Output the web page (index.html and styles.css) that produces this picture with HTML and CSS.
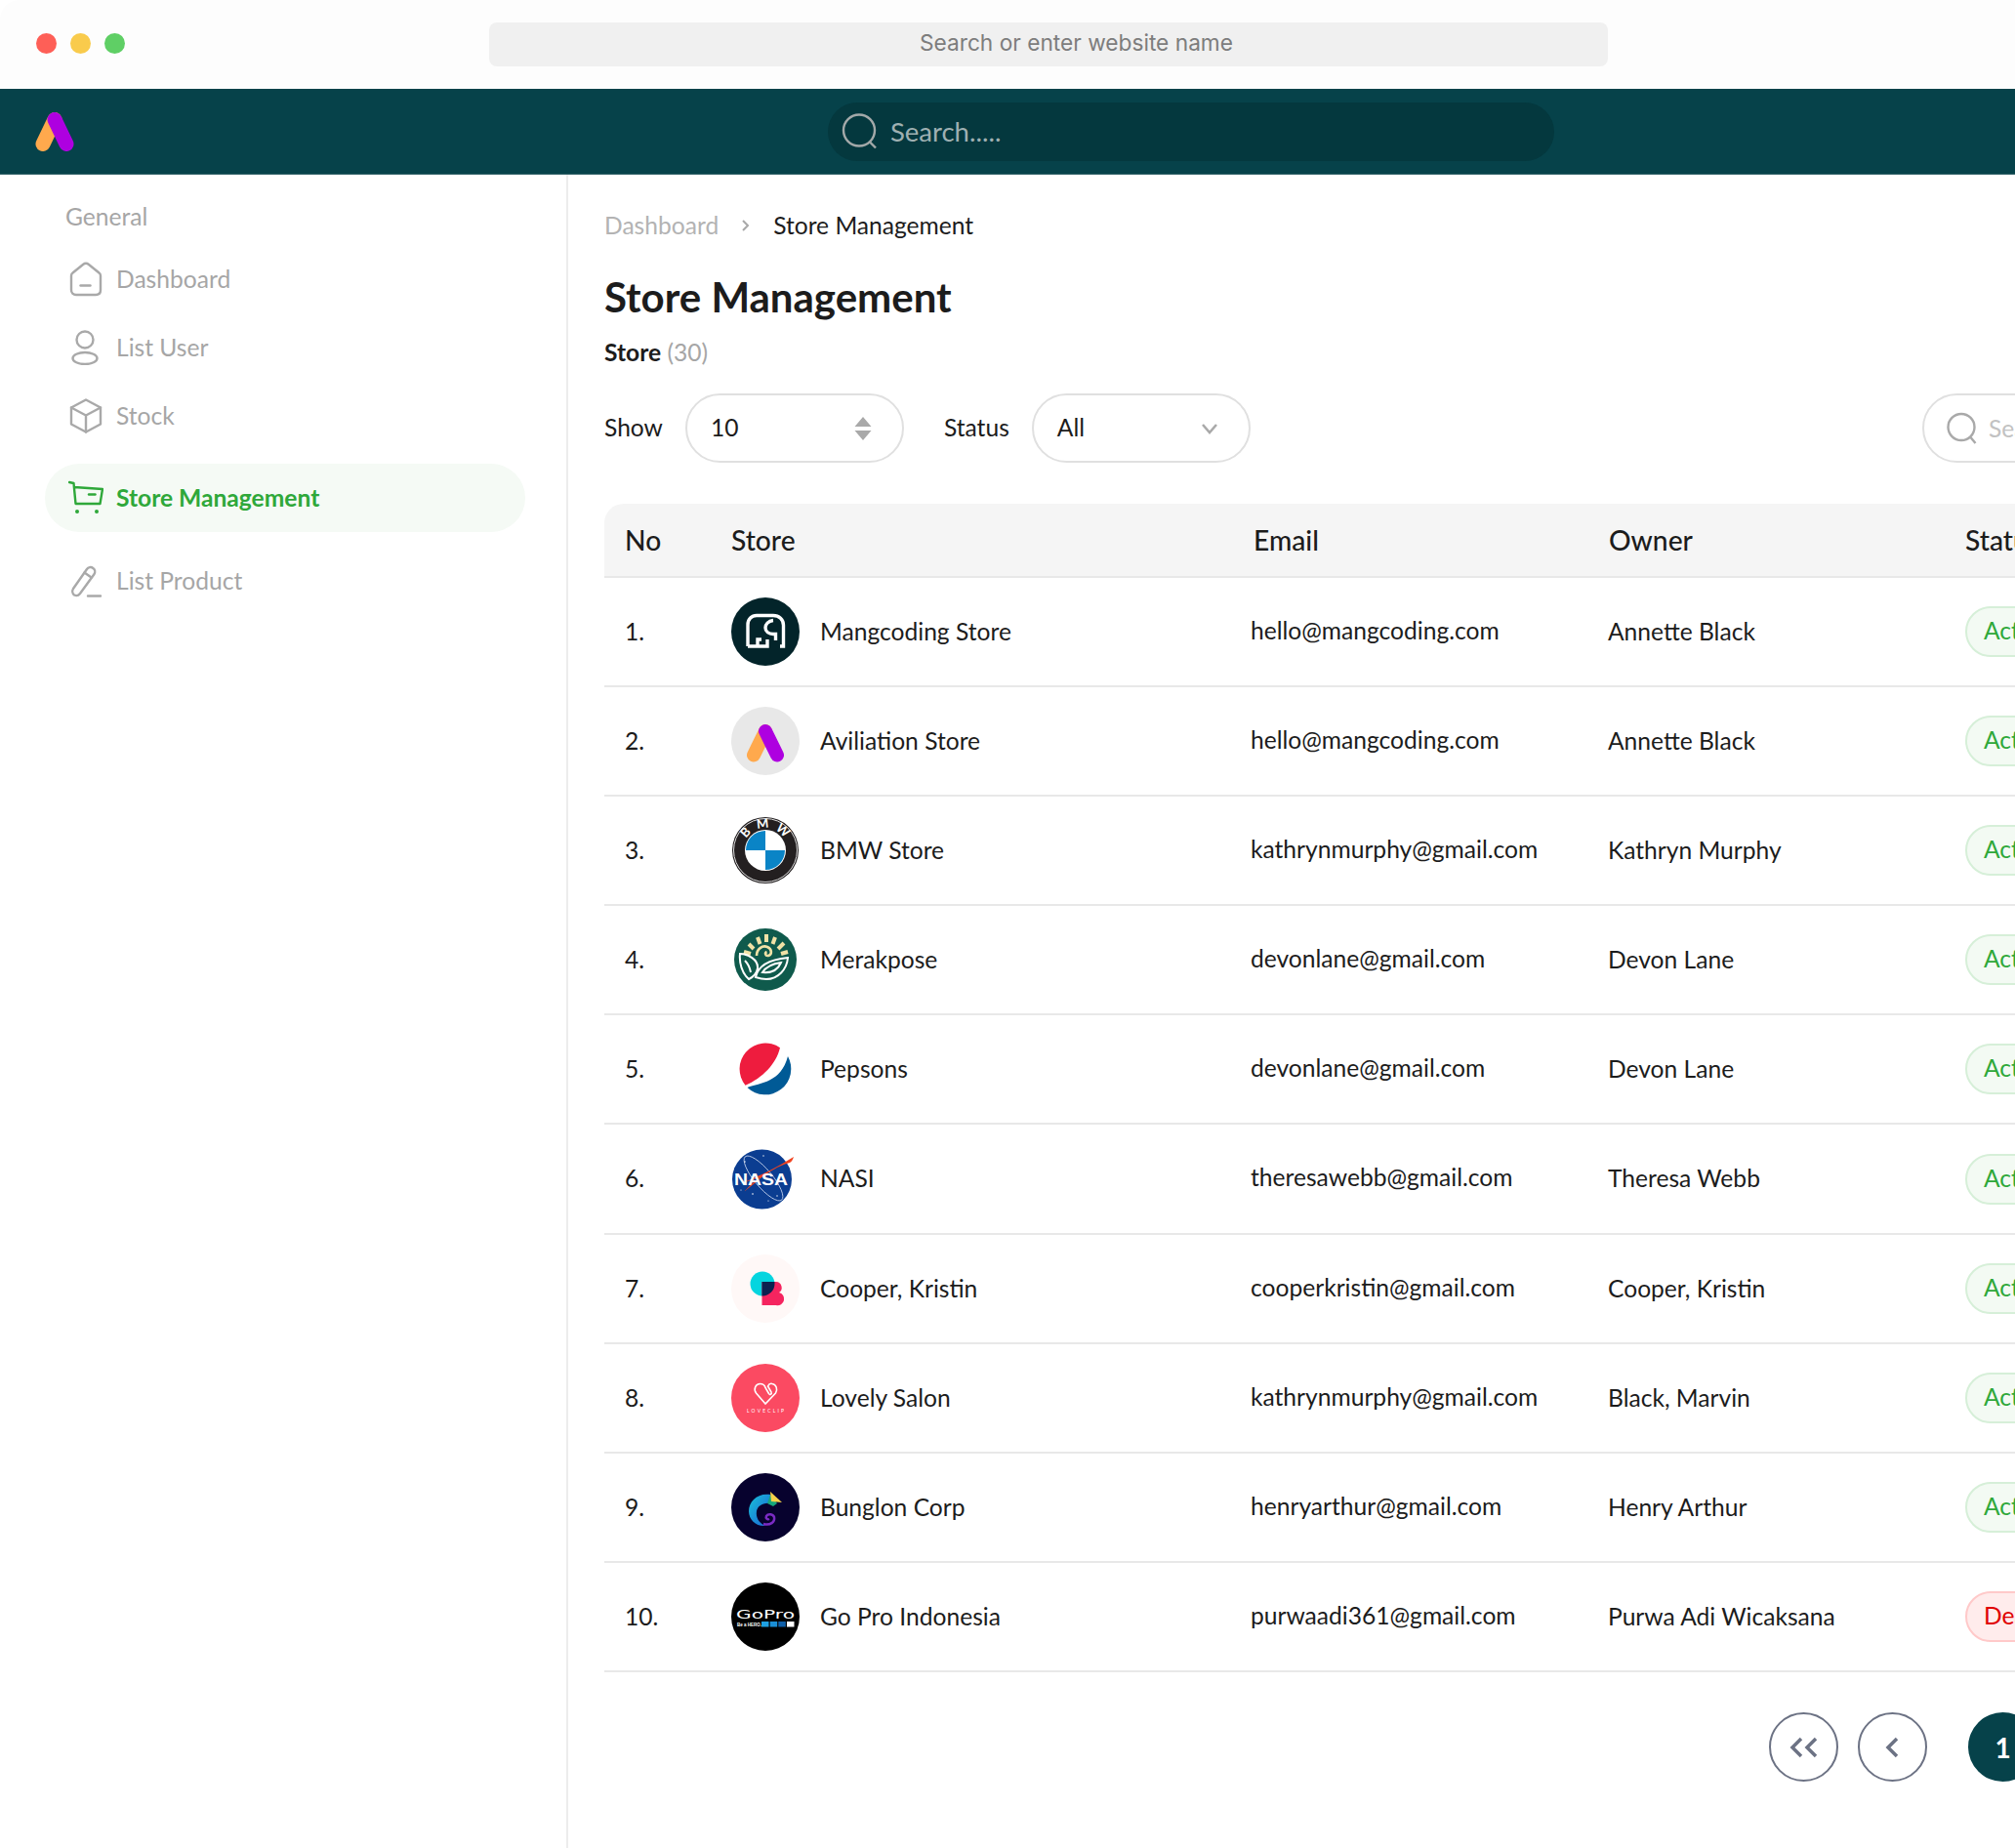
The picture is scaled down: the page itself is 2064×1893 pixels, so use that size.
FILE: index.html
```html
<!DOCTYPE html>
<html lang="en">
<head>
  <meta charset="UTF-8">
  <title>Store Management</title>
  <link rel="stylesheet" href="styles.css">
</head>
<body>

  <div class="window-bar">
    <div class="lights">
      <span class="light red"></span>
      <span class="light yellow"></span>
      <span class="light green"></span>
    </div>
    <div class="address">Search or enter website name</div>
  </div>

  <header class="topnav">
    <div class="brand">
      <svg width="40" height="40" viewBox="0 0 40 40">
        <path d="M8 32.500L20 7.500" stroke="#ffa94d" stroke-width="15" stroke-linecap="round"/>
        <path d="M15 12l7 15 4-8-5-11z" fill="#ff8f1a"/>
        <path d="M20 7.500L32 32.500" stroke="#ae00e0" stroke-width="15" stroke-linecap="round"/>
      </svg>
    </div>
    <div class="top-search">
      <svg width="38" height="38" viewBox="0 0 38 38" fill="none" stroke="#a3a9a9" stroke-width="2.400">
        <circle cx="18" cy="17.500" r="16"/>
        <path d="M29 29.500l6 6"/>
      </svg>
      <span>Search.....</span>
    </div>
  </header>

  <div class="layout">
    <aside class="sidebar">
      <div class="side-title">General</div>
      <ul class="side-menu">
        <li class="side-item">
          <svg class="side-icon" viewBox="0 0 36 36">
            <path d="M3 14.500c0-1.200.5-2.300 1.500-3L15 3c1.800-1.400 4.200-1.400 6 0l10.500 8.500c1 .7 1.500 1.800 1.500 3V29c0 3-2 5-5 5H8c-3 0-5-2-5-5z"/>
            <path d="M12.500 24.500h10"/>
          </svg>
          <span class="side-label">Dashboard</span>
        </li>
        <li class="side-item">
          <svg class="side-icon" viewBox="0 0 36 36">
            <circle cx="17" cy="10" r="8.500"/>
            <ellipse cx="17" cy="29" rx="12.500" ry="6"/>
          </svg>
          <span class="side-label">List User</span>
        </li>
        <li class="side-item">
          <svg class="side-icon" viewBox="0 0 36 36">
            <path d="M18 1.500L33 9.500v17l-15 8-15-8v-17z"/>
            <path d="M3 9.500l15 8 15-8M18 17.500v17"/>
          </svg>
          <span class="side-label">Stock</span>
        </li>
        <li class="side-item active">
          <svg class="side-icon" viewBox="0 0 36 36">
            <path d="M1 2l4.500 1L7.500 24h25L35 9 6 7"/>
            <path d="M21 14.500h6.500"/>
            <circle class="wheel" cx="9" cy="32" r="2"/>
            <circle class="wheel" cx="29" cy="32" r="2"/>
          </svg>
          <span class="side-label">Store Management</span>
        </li>
        <li class="side-item">
          <svg class="side-icon" viewBox="0 0 36 36">
            <path d="M5 26L19 6a4.500 4.500 0 0 1 7.400 5.200L12 31c-1.500 2-4 2.500-6 1.500-1.800-1.300-2.300-4.200-1-6.500z"/>
            <path d="M16.500 9.500l7 5M20 33.500h13"/>
          </svg>
          <span class="side-label">List Product</span>
        </li>
      </ul>
    </aside>

    <main class="content">
      <nav class="crumbs">
        <span class="crumb-link">Dashboard</span>
        <svg class="crumb-sep" width="10" height="14" viewBox="0 0 10 14"><path d="M2 2l5 5-5 5"/></svg>
        <span>Store Management</span>
      </nav>

      <h1 class="page-title">Store Management</h1>
      <p class="count"><b>Store</b> <span>(30)</span></p>

      <div class="controls">
        <label class="control-label">Show</label>
        <div class="select">
          <span class="select-value">10</span>
          <svg width="18" height="24" viewBox="0 0 18 24"><path d="M9 0l8.500 10H.5zM9 24L.5 14h17z" fill="#a9a9a9"/></svg>
        </div>
        <label class="control-label status-label">Status</label>
        <div class="select">
          <span class="select-value">All</span>
          <svg class="chev" width="18" height="12" viewBox="0 0 18 12"><path d="M2 2l7 8 7-8"/></svg>
        </div>
        <div class="table-search">
          <svg width="34" height="34" viewBox="0 0 34 34" fill="none" stroke="#a9a9a9" stroke-width="2.400">
            <circle cx="16" cy="15.500" r="13.500"/>
            <path d="M25.500 26l5 6"/>
          </svg>
          <span>Search</span>
        </div>
      </div>

      <table class="stores">
        <thead>
          <tr>
            <th class="col-no">No</th>
            <th class="col-store">Store</th>
            <th class="col-mail"><span class="head-mail">Email</span></th>
            <th class="col-owner"><span class="head-owner">Owner</span></th>
            <th class="col-status">Status</th>
          </tr>
        </thead>
        <tbody>
          <tr>
            <td class="col-no">1.</td>
            <td><div class="store-cell">
              <svg class="avatar" viewBox="0 0 70 70">
                <circle cx="35" cy="35" r="35" fill="#03242a"/>
                <g fill="none" stroke="#fff" stroke-width="3.400">
                  <path d="M17 50V28c0-6 4-9.500 9-9.500h17c6 0 10.500 4 10.500 10V50H50"/>
                  <path d="M17 50h20v-7"/>
                  <path d="M27 50v-7h4"/>
                  <path d="M43 23.500c-5 .5-8 4-8 7.500 0 4 3.500 6.500 8 6.500h2.500V44"/>
                </g>
              </svg>
              Mangcoding Store
            </div></td>
            <td><span class="mail">hello@mangcoding.com</span></td>
            <td>Annette Black</td>
            <td><span class="badge on">Active</span></td>
          </tr>
          <tr>
            <td class="col-no">2.</td>
            <td><div class="store-cell">
              <svg class="avatar" viewBox="0 0 70 70">
                <circle cx="35" cy="35" r="35" fill="#e8e8e8"/>
                <path d="M23 49.500L35 25" stroke="#ffa94d" stroke-width="14" stroke-linecap="round"/>
                <path d="M30 29l7 15 4-8-5-11z" fill="#ff8f1a"/>
                <path d="M35 25l12 24.500" stroke="#ae00e0" stroke-width="14" stroke-linecap="round"/>
              </svg>
              Aviliation Store
            </div></td>
            <td><span class="mail">hello@mangcoding.com</span></td>
            <td>Annette Black</td>
            <td><span class="badge on">Active</span></td>
          </tr>
          <tr>
            <td class="col-no">3.</td>
            <td><div class="store-cell">
              <svg class="avatar" viewBox="0 0 70 70">
                <circle cx="35" cy="35" r="34" fill="#231f20"/>
                <circle cx="35" cy="35" r="32.500" fill="none" stroke="#ddd" stroke-width="1"/>
                <circle cx="35" cy="35" r="21" fill="#fff"/>
                <path d="M35 35V15a20 20 0 0 0-20 20zM35 35v20a20 20 0 0 0 20-20z" fill="#0a84c6"/>
                <path id="bmw-arc" d="M12 35a23 23 0 0 1 46 0" fill="none"/>
                <text class="bmw-text"><textPath href="#bmw-arc" startOffset="50%" text-anchor="middle">B M W</textPath></text>
              </svg>
              BMW Store
            </div></td>
            <td><span class="mail">kathrynmurphy@gmail.com</span></td>
            <td>Kathryn Murphy</td>
            <td><span class="badge on">Active</span></td>
          </tr>
          <tr>
            <td class="col-no">4.</td>
            <td><div class="store-cell">
              <svg class="avatar" viewBox="0 0 70 70">
                <circle cx="35" cy="35" r="32" fill="#0f5a4c"/>
                <g fill="none" stroke="#f1e2a6" stroke-width="4">
                  <path d="M18 19l5 5M27 12l2.500 7M36 9v8M45 12l-2.500 7M54 18l-6 6M58 27l-7 2M13 27l7 2"/>
                  <path stroke-width="2.600" d="M26 31c0-7 6-11 11-9 5 2 5 8 1 9-3 .5-4-3-1.500-4"/>
                </g>
                <g fill="none" stroke="#fff" stroke-width="2">
                  <path d="M9 29c8 0 19 6 18 15-1 6-5 9-9 11C11 49 8 38 9 29z"/>
                  <path d="M25 53c2-10 12-18 33-20-1 12-10 22-22 22-4 0-8-1-11-2z"/>
                  <path d="M32 48c4-6 11-9 19-10-3 7-9 11-19 10zM14 36c3 3 5 7 6 12"/>
                </g>
              </svg>
              Merakpose
            </div></td>
            <td><span class="mail">devonlane@gmail.com</span></td>
            <td>Devon Lane</td>
            <td><span class="badge on">Active</span></td>
          </tr>
          <tr>
            <td class="col-no">5.</td>
            <td><div class="store-cell">
              <svg class="avatar" viewBox="0 0 70 70">
                <path d="M50 13.200C46 30 32 44 14.500 51.800A26.500 26.500 0 0 1 50 13.200z" fill="#ee1c3e"/>
                <path d="M16.500 54C30 49 51 49 58 22A26.500 26.500 0 0 1 16.500 54z" fill="#005a96"/>
              </svg>
              Pepsons
            </div></td>
            <td><span class="mail">devonlane@gmail.com</span></td>
            <td>Devon Lane</td>
            <td><span class="badge on">Active</span></td>
          </tr>
          <tr>
            <td class="col-no">6.</td>
            <td><div class="store-cell">
              <svg class="avatar" viewBox="0 0 70 70">
                <circle cx="31.500" cy="35" r="30.500" fill="#0b3d91"/>
                <ellipse cx="33" cy="34" rx="29" ry="9" transform="rotate(50 33 34)" fill="none" stroke="#c9d6ee" stroke-width=".8"/>
                <g fill="#fff">
                  <circle cx="14" cy="17" r=".7"/><circle cx="33" cy="11" r=".7"/><circle cx="22" cy="50" r=".8"/>
                  <circle cx="47" cy="52" r=".7"/><circle cx="38" cy="57" r=".6"/><circle cx="10" cy="46" r=".6"/>
                </g>
                <path d="M1 42c18-5 44-18 63-30-1 3-2 5-4 6-12 3-22 10-30 16-5 4-11 9-17 14 5-6 11-11 16-15-8 3-18 6-28 9z" fill="#f1431f"/>
                <text class="nasa-text" x="3" y="41" textLength="55" lengthAdjust="spacingAndGlyphs">NASA</text>
              </svg>
              NASI
            </div></td>
            <td><span class="mail">theresawebb@gmail.com</span></td>
            <td>Theresa Webb</td>
            <td><span class="badge on">Active</span></td>
          </tr>
          <tr>
            <td class="col-no">7.</td>
            <td><div class="store-cell">
              <svg class="avatar" viewBox="0 0 70 70">
                <defs><clipPath id="cooper-clip"><circle cx="32" cy="30" r="12.500"/></clipPath></defs>
                <circle cx="35" cy="35" r="35" fill="#fff8f7"/>
                <circle cx="32" cy="30" r="12.500" fill="#05d5df"/>
                <path d="M31.500 28H46a6 6 0 0 1 3 11 6.500 6.500 0 0 1-3 13H31.500z" fill="#f5245f"/>
                <path clip-path="url(#cooper-clip)" d="M31.500 28H46a6 6 0 0 1 3 11 6.500 6.500 0 0 1-3 13H31.500z" fill="#0c2150"/>
              </svg>
              Cooper, Kristin
            </div></td>
            <td><span class="mail">cooperkristin@gmail.com</span></td>
            <td>Cooper, Kristin</td>
            <td><span class="badge on">Active</span></td>
          </tr>
          <tr>
            <td class="col-no">8.</td>
            <td><div class="store-cell">
              <svg class="avatar" viewBox="0 0 70 70">
                <circle cx="35" cy="35" r="35" fill="#fb4a62"/>
                <g fill="none" stroke="#fff" stroke-width="1.600" stroke-linecap="round">
                  <path d="M35 41L25.500 30c-3-4-.5-9.500 4-9.500 3 0 5 2 5.500 4l3.500 6c1 2 3.500.5 2.500-1.500l-3.500-6c1-2 3-3 4.500-2.500 4 .5 6 5.500 3.500 9.500z"/>
                </g>
                <text class="clip-text" x="16" y="50" textLength="38">LOVECLIP</text>
              </svg>
              Lovely Salon
            </div></td>
            <td><span class="mail">kathrynmurphy@gmail.com</span></td>
            <td>Black, Marvin</td>
            <td><span class="badge on">Active</span></td>
          </tr>
          <tr>
            <td class="col-no">9.</td>
            <td><div class="store-cell">
              <svg class="avatar" viewBox="0 0 70 70">
                <defs>
                  <linearGradient id="bunglon-grad" x1="0" y1="0" x2="1" y2="1">
                    <stop offset="0" stop-color="#19c3d8"/>
                    <stop offset="1" stop-color="#1a5fd6"/>
                  </linearGradient>
                </defs>
                <circle cx="35" cy="35" r="35" fill="#07022e"/>
                <path d="M40 22C27 20 18 29 18 39c0 9 8 16 17 15-7-3-10-9-9-15 1-5 6-9 14-8z" fill="url(#bunglon-grad)"/>
                <path d="M40 22l-3 9 6 3 4-3z" fill="#16a67c"/>
                <path d="M40 19l12 11-11-1z" fill="#f6d24a"/>
                <path d="M33 52c7 2 12-2 11-7-1-3-6-4-8-1-1 2 1 4 3 3" fill="none" stroke="#7a2bc4" stroke-width="2.500"/>
              </svg>
              Bunglon Corp
            </div></td>
            <td><span class="mail">henryarthur@gmail.com</span></td>
            <td>Henry Arthur</td>
            <td><span class="badge on">Active</span></td>
          </tr>
          <tr>
            <td class="col-no">10.</td>
            <td><div class="store-cell">
              <svg class="avatar" viewBox="0 0 70 70">
                <circle cx="35" cy="35" r="35" fill="#000"/>
                <text class="gopro-text" x="5" y="37" textLength="60" lengthAdjust="spacingAndGlyphs">GoPro</text>
                <text class="hero-text" x="6" y="44.500">Be a HERO.</text>
                <rect x="31" y="40" width="7.500" height="5.500" fill="#1ea0e0"/>
                <rect x="39.700" y="40" width="7.500" height="5.500" fill="#1a8fd6"/>
                <rect x="48.300" y="40" width="7.500" height="5.500" fill="#0f5fa8"/>
                <rect x="57" y="40" width="7.500" height="5.500" fill="#fff"/>
              </svg>
              Go Pro Indonesia
            </div></td>
            <td><span class="mail">purwaadi361@gmail.com</span></td>
            <td>Purwa Adi Wicaksana</td>
            <td><span class="badge off">Deactive</span></td>
          </tr>
        </tbody>
      </table>

      <div class="pagination">
        <span class="page-btn">
          <svg width="30" height="22" viewBox="0 0 30 22"><path d="M12 2L3 11l9 9M27 2l-9 9 9 9"/></svg>
        </span>
        <span class="page-btn">
          <svg width="16" height="22" viewBox="0 0 16 22"><path d="M12 2l-9 9 9 9"/></svg>
        </span>
        <span class="page-num">1</span>
      </div>
    </main>
  </div>

</body>
</html>
```

FILE: styles.css
```css
* {
  box-sizing: border-box;
}
html, body {
  margin: 0;
  width: 2064px;
  height: 1893px;
  overflow: hidden;
}
body {
  font-family: Lato, "Liberation Sans", sans-serif;
  font-size: 24.6px;
  color: #1c1c1c;
  background: #fff;
}

/* browser chrome */
.window-bar {
  height: 91px;
  display: flex;
  align-items: center;
  background: #fdfdfd;
  border-top-left-radius: 20px;
}
.lights {
  width: 501px;
  margin-top: -3px;
  padding-left: 37px;
  display: flex;
  gap: 14px;
}
.light {
  width: 21px;
  height: 21px;
  border-radius: 50%;
}
.light.red { background: #fe5f57; }
.light.yellow { background: #f9cb4c; }
.light.green { background: #5fcf65; }
.address {
  width: 1146px;
  height: 45px;
  padding-left: 441px;
  line-height: 41px;
  background: #f0f0f0;
  border-radius: 8px;
  color: #7d7d7d;
  font-family: Inter, sans-serif;
  font-size: 22.700px;
  white-space: nowrap;
}

/* top navigation */
.topnav {
  height: 88px;
  display: flex;
  align-items: center;
  background: #06424a;
  border-bottom: 1px solid #3c6a70;
}
.brand {
  width: 848px;
  padding-left: 36px;
  display: flex;
}
.top-search {
  width: 744px;
  height: 60px;
  padding-left: 14px;
  display: flex;
  align-items: center;
  gap: 12px;
  background: #04383e;
  border-radius: 30px;
  color: #9fb0b2;
  font-size: 27.500px;
}

.layout {
  display: flex;
  height: 1714px;
}

/* sidebar */
.sidebar {
  width: 582px;
  flex-shrink: 0;
  border-right: 2px solid #ececec;
}
.side-title {
  padding: 28px 0 0 67px;
  line-height: 30px;
  color: #a6a6a6;
}
.side-menu {
  list-style: none;
  margin: 14px 0 0 46px;
  padding: 0;
  width: 492px;
}
.side-item {
  height: 70px;
  padding-left: 24px;
  display: flex;
  align-items: center;
  gap: 13px;
  color: #a6a6a6;
}
.side-label {
  margin-top: -2px;
}
.side-icon {
  width: 36px;
  height: 36px;
  fill: none;
  stroke: #a9a9a9;
  stroke-width: 2.400;
  stroke-linecap: round;
  stroke-linejoin: round;
}
.side-item.active {
  margin: 14px 0 15px;
  border-radius: 35px;
  background: #f5faf5;
  color: #2fa83a;
  font-weight: 700;
}
.side-item.active .side-icon {
  stroke: #2fa83a;
}
.side-item.active .wheel {
  fill: #2fa83a;
  stroke: none;
}

/* main area */
.content {
  padding: 37px 0 0 37px;
}
.crumbs {
  display: flex;
  align-items: center;
  height: 30px;
  line-height: 30px;
  white-space: nowrap;
}
.crumb-link {
  color: #b3b3b3;
}
.crumb-sep {
  margin: 0 23px;
  fill: none;
  stroke: #a9a9a9;
  stroke-width: 2;
}
.page-title {
  margin: 33px 0 0;
  font-size: 42px;
  line-height: 50px;
  font-weight: 700;
  white-space: nowrap;
}
.count {
  margin: 17px 0 0;
  line-height: 30px;
}
.count span {
  color: #a6a6a6;
}
.controls {
  width: 1650px;
  height: 71px;
  margin-top: 27px;
  display: flex;
  align-items: center;
}
.control-label {
  margin-right: 23px;
  margin-top: -2px;
}
.status-label {
  margin-left: 41px;
}
.select {
  width: 224px;
  height: 71px;
  padding: 0 31px 0 24px;
  display: flex;
  align-items: center;
  justify-content: space-between;
  border: 2px solid #e0e0e0;
  border-radius: 36px;
}
.select-value {
  margin-top: -2px;
}
.chev {
  fill: none;
  stroke: #a9a9a9;
  stroke-width: 2.500;
}
.table-search {
  width: 300px;
  height: 71px;
  margin-left: auto;
  padding-left: 22px;
  display: flex;
  align-items: center;
  gap: 10px;
  border: 2px solid #e0e0e0;
  border-radius: 36px;
  color: #c2c2c2;
}

/* table */
.stores {
  margin-top: 42px;
  width: 1694px;
  table-layout: fixed;
  border-collapse: separate;
  border-spacing: 0;
}
.stores th {
  height: 76px;
  padding: 0;
  background: #f5f5f5;
  border-bottom: 2px solid #e8e8e8;
  font-size: 28.200px;
  font-weight: 500;
  text-align: left;
}
.stores th:first-child {
  border-top-left-radius: 20px;
}
.stores td {
  height: 112px;
  padding: 0 0 2px;
  border-bottom: 2px solid #e8e8e8;
  white-space: nowrap;
}
/* rows in the design run 112.1px, so one of them takes the extra pixel */
.stores tr:nth-child(6) td {
  height: 113px;
}
.stores .col-no {
  width: 130px;
  padding-left: 21px;
}
.col-store { width: 532px; }
.col-mail { width: 366px; }
.col-owner { width: 366px; }
.col-status { width: 300px; }
.head-mail {
  padding-left: 3px;
}
.head-owner {
  padding-left: 1px;
}
.store-cell {
  display: flex;
  align-items: center;
  gap: 21px;
}
.avatar {
  width: 70px;
  height: 70px;
  margin-top: 2px;
  flex-shrink: 0;
}
.mail {
  position: relative;
  top: -1px;
}
.badge {
  display: inline-block;
  height: 52px;
  margin-top: 2px;
  padding: 0 24px 0 17px;
  line-height: 46px;
  border-radius: 26px;
  border: 2px solid;
}
.badge.on {
  color: #2fa83a;
  background: #f3faf3;
  border-color: #d6efd8;
}
.badge.off {
  color: #e00000;
  background: #ffecec;
  border-color: #ffc9c9;
}

/* logo text */
.bmw-text {
  font: 700 13px Lato, sans-serif;
  word-spacing: 3px;
  fill: #fff;
}
.nasa-text {
  font: 700 17px "Liberation Sans", sans-serif;
  fill: #fff;
}
.clip-text {
  font: 400 4.800px Lato, sans-serif;
  fill: #fff;
}
.gopro-text {
  font: 400 12px "DejaVu Sans", sans-serif;
  fill: #fff;
}
.hero-text {
  font: 700 4.500px "Liberation Sans", sans-serif;
  fill: #fff;
}

/* pagination */
.pagination {
  margin: 41px 0 0 1193px;
  display: flex;
  align-items: center;
  gap: 20px;
}
.page-btn {
  width: 71px;
  height: 71px;
  display: flex;
  align-items: center;
  justify-content: center;
  border: 2px solid #6c7284;
  border-radius: 50%;
}
.page-btn svg {
  fill: none;
  stroke: #6c7284;
  stroke-width: 3.500;
}
.page-num {
  width: 71px;
  height: 71px;
  margin-left: 22px;
  display: flex;
  align-items: center;
  justify-content: center;
  border-radius: 50%;
  background: #06424a;
  color: #fff;
  font-size: 28px;
  font-weight: 700;
}
```
